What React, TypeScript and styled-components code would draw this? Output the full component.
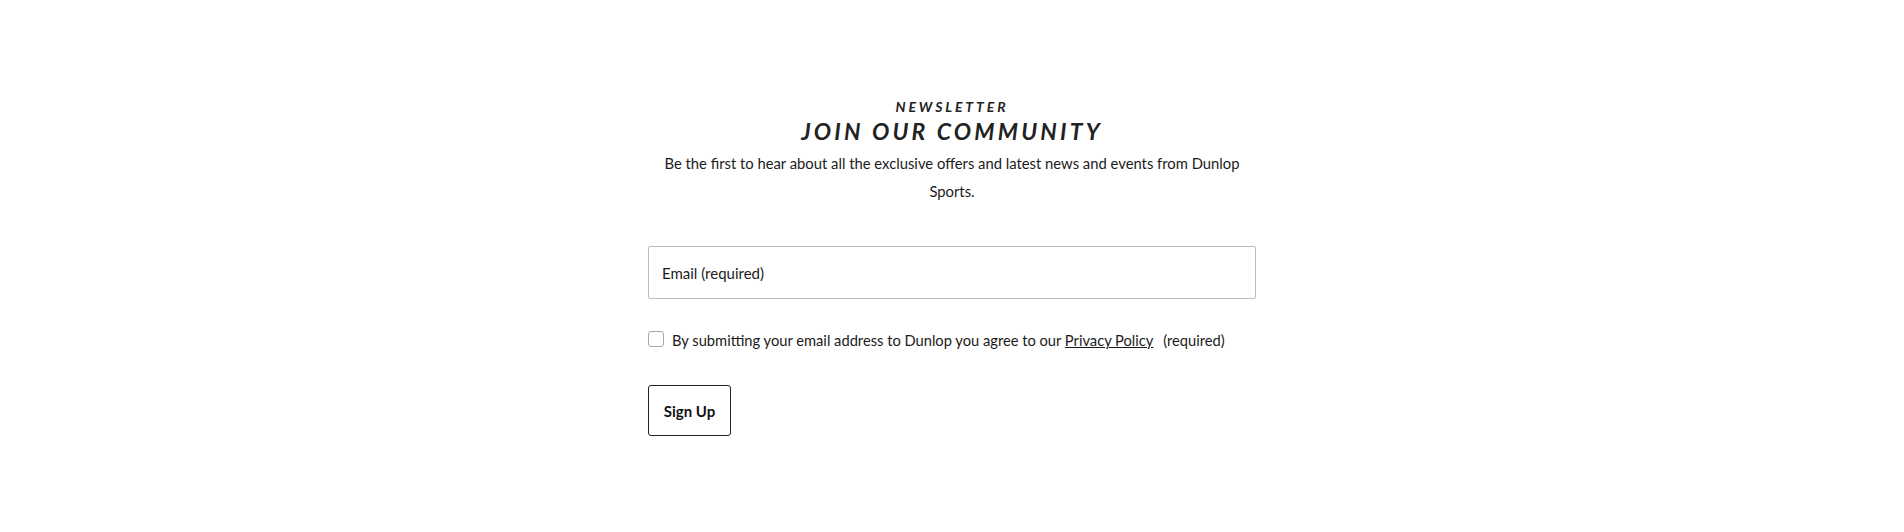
import React from "react";
import styled, { createGlobalStyle } from "styled-components";

const Global = createGlobalStyle`
  html, body { margin: 0; padding: 0; background: #fff; }
  body { font-family: Lato, "Liberation Sans", sans-serif; color: #1b1b1b; }
  * { box-sizing: border-box; }
`;

const Page = styled.main`
  width: 100%;
  min-height: 532px;
  display: flex;
  justify-content: center;
  padding-top: 98px;
`;

const Section = styled.section`
  width: 608px;
  display: flex;
  flex-direction: column;
`;

const Header = styled.header`
  display: flex;
  flex-direction: column;
  align-items: center;
  text-align: center;
`;

const Eyebrow = styled.p`
  margin: 0;
  font-family: Lato, "Liberation Sans", sans-serif;
  font-style: italic;
  font-weight: 700;
  font-size: 14px;
  line-height: 18px;
  letter-spacing: 2.9px;
  color: #222;
`;

const Title = styled.h2`
  margin: 1px 0 0;
  font-family: Lato, "Liberation Sans", sans-serif;
  font-style: italic;
  font-weight: 700;
  font-size: 23px;
  line-height: 28px;
  letter-spacing: 3.2px;
  color: #222;
`;

const Lead = styled.p`
  margin: 4px 0 0;
  font-size: 14.8px;
  line-height: 28px;
  color: #1b1b1b;
  max-width: 600px;
`;

const Form = styled.form`
  display: flex;
  flex-direction: column;
  align-items: flex-start;
  margin-top: 41px;
`;

const EmailInput = styled.input`
  width: 100%;
  height: 53px;
  border: 1px solid #bdbdbd;
  border-radius: 2px;
  padding: 0 13px;
  font-family: Lato, "Liberation Sans", sans-serif;
  font-size: 15px;
  color: #1b1b1b;
  outline: none;
  &::placeholder { color: #1b1b1b; opacity: 1; }
`;

const Consent = styled.label`
  display: flex;
  align-items: flex-start;
  gap: 8px;
  margin-top: 31px;
  font-size: 14.7px;
  line-height: 20px;
  color: #1b1b1b;
`;

const Box = styled.span`
  width: 16px;
  height: 16px;
  margin-top: 1px;
  border: 1px solid #aaa;
  border-radius: 3px;
  flex-shrink: 0;
`;

const PolicyLink = styled.a`
  color: #1b1b1b;
  text-decoration: underline;
  margin-right: 6px;
`;

const Button = styled.button`
  margin-top: 35px;
  width: 83px;
  height: 51px;
  background: #fff;
  border: 1px solid #222;
  border-radius: 3px;
  font-family: Lato, "Liberation Sans", sans-serif;
  font-weight: 700;
  font-size: 15px;
  color: #111;
  cursor: pointer;
`;

export default function App() {
  return (
    <>
      <Global />
      <Page>
        <Section>
          <Header>
            <Eyebrow>NEWSLETTER</Eyebrow>
            <Title>JOIN OUR COMMUNITY</Title>
            <Lead>
              Be the first to hear about all the exclusive offers and latest news and events from Dunlop Sports.
            </Lead>
          </Header>
          <Form onSubmit={(e) => e.preventDefault()}>
            <EmailInput type="email" placeholder="Email (required)" />
            <Consent>
              <Box />
              <span>
                By submitting your email address to Dunlop you agree to our{" "}
                <PolicyLink href="#">Privacy Policy</PolicyLink> (required)
              </span>
            </Consent>
            <Button type="submit">Sign Up</Button>
          </Form>
        </Section>
      </Page>
    </>
  );
}
